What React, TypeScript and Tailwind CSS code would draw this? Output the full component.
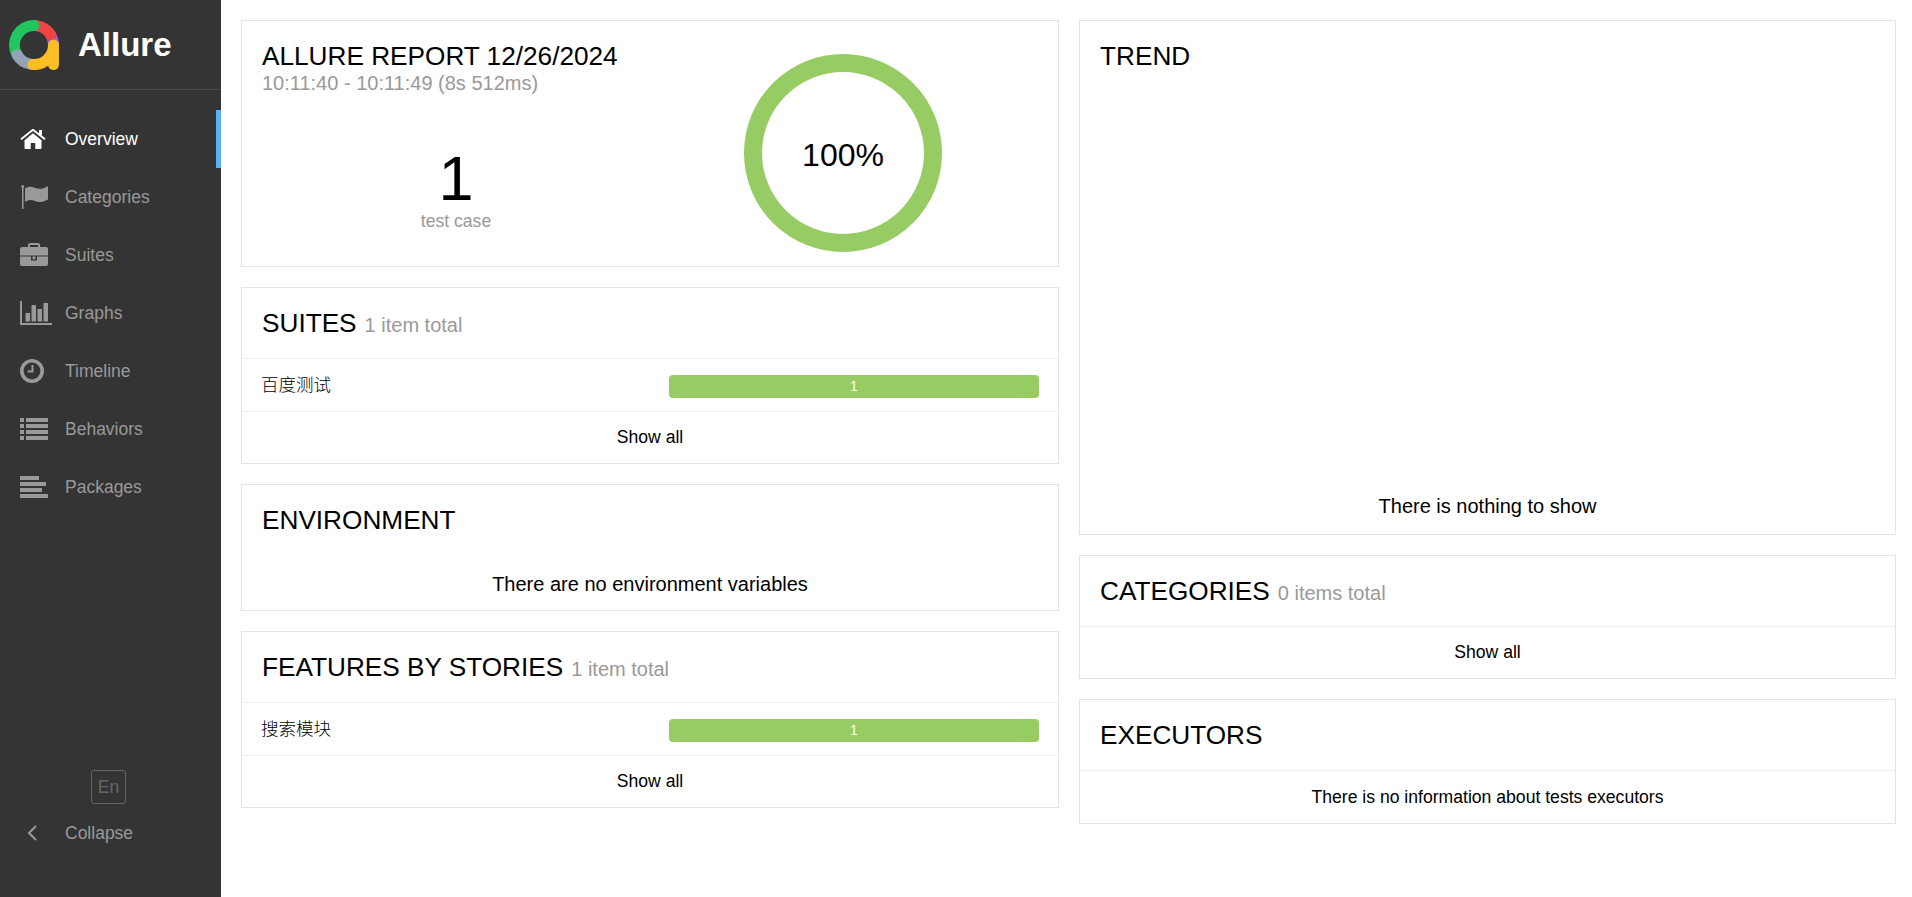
import type { ReactNode } from 'react';

const font = '[font-family:"Liberation_Sans","Noto_Sans_CJK_SC",sans-serif]';

// FontAwesome 4 look, not in the icon packages so drawn by hand
function HomeIcon() {
  return (
    <svg width="26" height="20" viewBox="0 0 26 20" fill="currentColor">
      <path d="M13 4.2 4.5 11.3V19a1 1 0 0 0 1 1H10.7v-6h4.6v6H20.5a1 1 0 0 0 1-1V11.3Z" />
      <path d="M1 10.2 13 .8l12 9.4" fill="none" stroke="currentColor" strokeWidth="2" />
      <rect x="19" y="1" width="3" height="5" />
    </svg>
  );
}

function FlagIcon() {
  return (
    <svg width="28" height="24" viewBox="0 0 28 24" fill="currentColor">
      <rect x="2" y="1" width="1.5" height="23" />
      <circle cx="2.8" cy="1.5" r="1.5" />
      <path d="M5 3.5C9 1 12 1.5 15 3c4 1.6 8 .6 13-1.8V14.5c-5 2.6-9 3.4-13 1.6-3-1.4-6-1.8-10 .6Z" />
    </svg>
  );
}

function SuitesIcon() {
  return (
    <svg width="28" height="24" viewBox="0 0 28 24" fill="currentColor">
      <path d="M8 5V2C8 .9 8.9 0 10 0h8c1.1 0 2 .9 2 2v3h-2V2h-8v3Z" />
      <path d="M2 4h24a2 2 0 0 1 2 2v6.5H0V6a2 2 0 0 1 2-2Z" />
      <path d="M0 13.5h11V17.5h6V13.5h11V21a2 2 0 0 1-2 2H2a2 2 0 0 1-2-2Z" />
      <rect x="12.5" y="13.5" width="3" height="2.8" />
    </svg>
  );
}

function GraphsIcon() {
  return (
    <svg width="32" height="24" viewBox="0 0 32 24" fill="currentColor">
      <rect x="0" y="0" width="2" height="24" />
      <rect x="0" y="22" width="32" height="2" />
      <rect x="5.5" y="12" width="4.5" height="8.5" />
      <rect x="11.5" y="4" width="4.5" height="16.5" />
      <rect x="17.5" y="8" width="4.5" height="12.5" />
      <rect x="23.5" y="2" width="4.5" height="18.5" />
    </svg>
  );
}

function ClockIcon() {
  return (
    <svg width="24" height="24" viewBox="0 0 24 24" fill="none" stroke="currentColor">
      <circle cx="12" cy="12" r="10.2" strokeWidth="3.6" />
      <path d="M12.5 6v6.5H7.5" strokeWidth="2" />
    </svg>
  );
}

function BehaviorsIcon() {
  return (
    <svg width="28" height="22" viewBox="0 0 28 22" fill="currentColor">
      <rect x="0" y="0" width="4" height="4" />
      <rect x="6" y="0" width="22" height="4" />
      <rect x="0" y="6" width="4" height="4" />
      <rect x="6" y="6" width="22" height="4" />
      <rect x="0" y="12" width="4" height="4" />
      <rect x="6" y="12" width="22" height="4" />
      <rect x="0" y="18" width="4" height="4" />
      <rect x="6" y="18" width="22" height="4" />
    </svg>
  );
}

function PackagesIcon() {
  return (
    <svg width="28" height="22" viewBox="0 0 28 22" fill="currentColor">
      <rect x="0" y="0" width="19" height="4" />
      <rect x="0" y="6" width="26" height="4" />
      <rect x="0" y="12" width="22" height="4" />
      <rect x="0" y="18" width="28" height="4" />
    </svg>
  );
}

const navItems = [
  { label: 'Overview', icon: <HomeIcon />, active: true },
  { label: 'Categories', icon: <FlagIcon /> },
  { label: 'Suites', icon: <SuitesIcon /> },
  { label: 'Graphs', icon: <GraphsIcon /> },
  { label: 'Timeline', icon: <ClockIcon /> },
  { label: 'Behaviors', icon: <BehaviorsIcon /> },
  { label: 'Packages', icon: <PackagesIcon /> },
];

function Logo() {
  return (
    <svg width="50" height="50" viewBox="0 0 50 50" fill="none" strokeWidth="11" strokeLinecap="round" className="shrink-0">
      <path d="M44.5 25V44.5" stroke="#fbbf24" />
      <path d="M44.5 25A19.5 19.5 0 0 0 41.9 15.25" stroke="#8b5cf6" />
      <path d="M41.9 15.25A19.5 19.5 0 0 0 27 5.6" stroke="#ef4444" />
      <path d="M25 5.5A19.5 19.5 0 0 0 8.1 34.75" stroke="#22c55e" />
      <path d="M8.1 34.75A19.5 19.5 0 0 0 22 44.3" stroke="#94a3b8" />
      <path d="M24 44.5A19.5 19.5 0 0 0 44.5 25" stroke="#fbbf24" />
    </svg>
  );
}

function Card({ title, note, className, children }: { title: string; note?: string; className: string; children?: ReactNode }) {
  return (
    <div className={`border border-[#e4e4e4] bg-white flex flex-col ${className}`}>
      <div className="h-[70px] px-5 flex items-center shrink-0">
        <h2 className="text-[26.2px] text-black leading-none">{title}</h2>
        {note && <span className="text-[20px] text-[#999] ml-2 mt-1">{note}</span>}
      </div>
      {children}
    </div>
  );
}

function BarRow({ name }: { name: string }) {
  return (
    <div className="h-[53px] border-t border-[#eee] px-[19px] flex items-center">
      <div className="w-[408px] text-[17.5px] font-light text-black">{name}</div>
      <div className="flex-1 h-[23px] mt-[2px] rounded-[4px] bg-[#97cc64] text-white text-[14px] flex items-center justify-center">1</div>
    </div>
  );
}

function ShowAll() {
  return <div className="h-[52px] border-t border-[#eee] flex items-center justify-center text-[17.6px] text-black">Show all</div>;
}

export default function App() {
  return (
    <div className={`flex w-[1912px] h-[897px] overflow-hidden bg-white ${font}`}>
      <aside className="w-[221px] shrink-0 bg-[#343434] flex flex-col">
        <div className="h-[90px] border-b border-[#4a4a4a] flex items-center pl-[9px] gap-[19px] shrink-0">
          <Logo />
          <span className="text-white font-bold text-[33px]">Allure</span>
        </div>
        <nav className="pt-[20px] flex flex-col">
          {navItems.map((item) => (
            <div
              key={item.label}
              className={`h-[58px] flex items-center text-[17.5px] ${item.active ? 'text-white border-r-[5px] border-[#5eb1f0]' : 'text-[#999]'}`}
            >
              <span className="w-[65px] pl-[20px] flex items-center shrink-0">{item.icon}</span>
              {item.label}
            </div>
          ))}
        </nav>
        <div className="mt-auto pb-[35px] flex flex-col">
          <div className="self-start ml-[91px] w-[35px] h-[34px] border border-[#666] rounded-[3px] text-[#666] text-[17.5px] flex items-center justify-center">En</div>
          <div className="h-[58px] flex items-center text-[17.5px] text-[#999]">
            <span className="w-[65px] pl-[27px] flex items-center shrink-0">
              <svg width="10" height="16" viewBox="0 0 10 16" fill="none" stroke="currentColor" strokeWidth="2">
                <path d="M9 1 2 8l7 7" />
              </svg>
            </span>
            Collapse
          </div>
        </div>
      </aside>
      <main className="flex-1 grid grid-cols-[818px_817px] gap-5 pt-5 pl-5 items-start">
        <div className="flex flex-col gap-5">
          <div className="h-[247px] border border-[#e4e4e4] p-5 flex">
            <div className="w-[388px] shrink-0">
              <h2 className="text-[26.2px] text-black leading-[30px] mb-[2px] whitespace-nowrap">ALLURE REPORT 12/26/2024</h2>
              <div className="text-[20px] text-[#999] leading-[20px]">10:11:40 - 10:11:49 (8s 512ms)</div>
              <div className="flex flex-col items-center mt-[52px]">
                <div className="text-[63px] text-black leading-[65px] pt-[1px]">1</div>
                <div className="text-[17.6px] text-[#999] leading-[20px]">test case</div>
              </div>
            </div>
            <div className="ml-[94px] mt-[13px] w-[198px] h-[198px] shrink-0 rounded-full border-[18.5px] border-[#97cc64] flex items-center justify-center text-[32px] text-black pt-[4px]">100%</div>
          </div>
          <Card title="SUITES" note="1 item total" className="h-[177px]">
            <BarRow name="百度测试" />
            <ShowAll />
          </Card>
          <Card title="ENVIRONMENT" className="h-[127px]">
            <div className="flex-1 flex items-center justify-center text-[20px] text-black pt-[2px]">There are no environment variables</div>
          </Card>
          <Card title="FEATURES BY STORIES" note="1 item total" className="h-[177px]">
            <BarRow name="搜索模块" />
            <ShowAll />
          </Card>
        </div>
        <div className="flex flex-col gap-5">
          <Card title="TREND" className="h-[515px]">
            <div className="mt-auto h-[56px] flex items-center justify-center text-[20px] text-black">There is nothing to show</div>
          </Card>
          <Card title="CATEGORIES" note="0 items total" className="h-[124px]">
            <ShowAll />
          </Card>
          <Card title="EXECUTORS" className="h-[125px]">
            <div className="flex-1 border-t border-[#eee] flex items-center justify-center text-[17.6px] text-black">There is no information about tests executors</div>
          </Card>
        </div>
      </main>
    </div>
  );
}
